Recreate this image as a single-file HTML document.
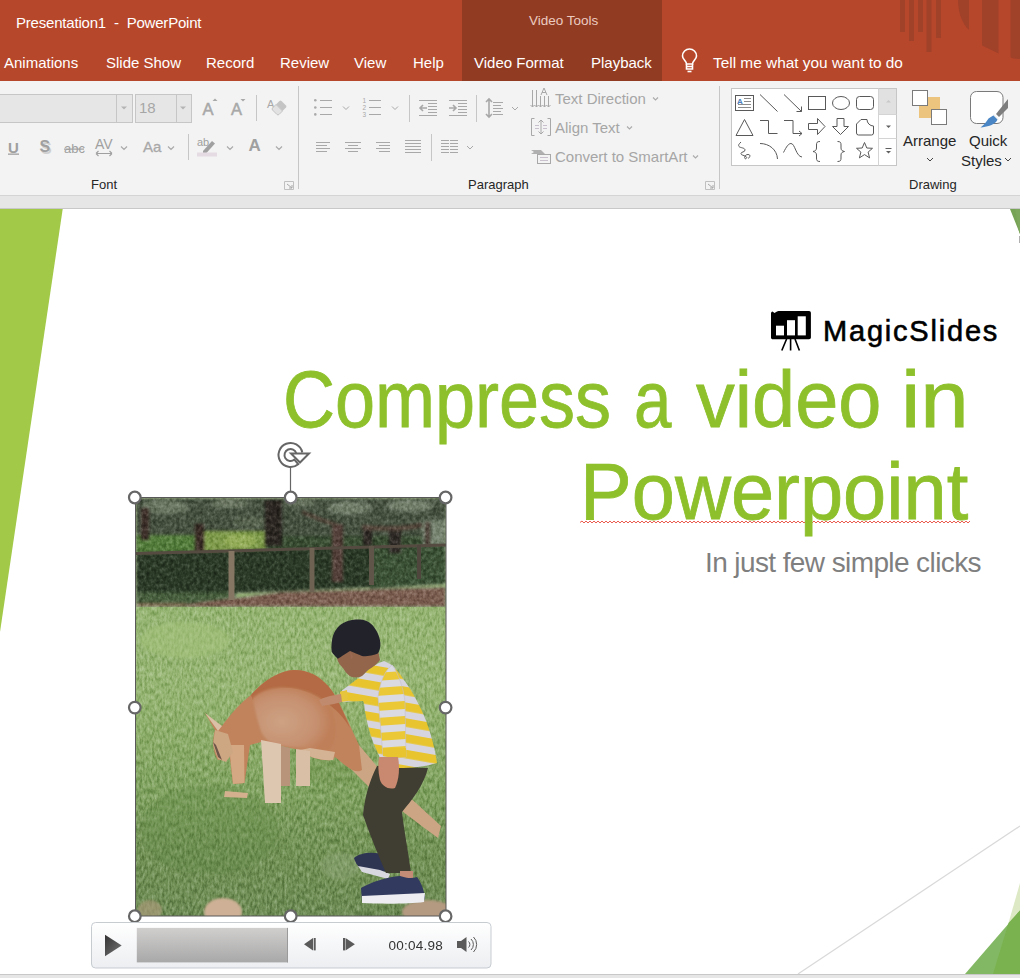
<!DOCTYPE html>
<html><head><meta charset="utf-8">
<style>
html,body{margin:0;padding:0;}
body{width:1020px;height:978px;overflow:hidden;position:relative;background:#fff;font-family:"Liberation Sans",sans-serif;}
.a{position:absolute;white-space:nowrap;}
#tb{position:absolute;left:0;top:0;width:1020px;height:81px;background:#B7472A;}
#ctx{position:absolute;left:462px;top:0;width:200px;height:81px;background:#923B23;}
.tw{color:#fff;font-size:15px;}
#rib{position:absolute;left:0;top:81px;width:1020px;height:114px;background:#F3F3F3;border-bottom:1px solid #D4D4D4;}
#gap{position:absolute;left:0;top:196px;width:1020px;height:12px;background:#E6E6E6;border-bottom:1px solid #C8C8C8;}
#slide{position:absolute;left:0;top:209px;width:1020px;height:765px;background:#fff;overflow:hidden;}
#bot{position:absolute;left:0;top:974px;width:1020px;height:4px;background:#E6E6E6;border-top:1px solid #C8C8C8;}
.gl{color:#A6A6A6;font-size:15px;}
.tt{font-size:80px;color:#8DC02B;-webkit-text-stroke:0.8px #8DC02B;transform-origin:0 0;}
.lbl{color:#262626;font-size:13px;}
</style></head>
<body>
<div id="tb"></div>
<div id="ctx"></div>

<svg class="a" style="left:660px;top:0" width="360" height="81" viewBox="660 0 360 81">
 <g fill="#A0412A">
  <rect x="900" y="0" width="5" height="32"/>
  <rect x="909" y="0" width="5" height="41"/>
  <rect x="918" y="0" width="5" height="32"/>
  <rect x="926.5" y="0" width="5" height="52"/>
  <rect x="936" y="0" width="5" height="38"/>
  <path d="M958 0h11v30c-7-6-11-18-11-30z"/>
  <path d="M982 0h16.5v53.5l-16.5-8z"/>
  <path d="M1010.5 0h9.5v59c-5 0-9.5-1-9.5-2z"/>
 </g>
 <g fill="none" stroke="#fff" stroke-width="1.6">
  <path d="M686.5 64c0-3-4-4.5-4-8a7 7 0 0 1 14 0c0 3.5-4 5-4 8z"/>
  <path d="M686.5 64v5h6v-5M686.5 66.5h6"/>
  <path d="M687.5 71.5h4"/>
 </g>
</svg>
<div class="a tw" style="left:16px;top:14px;letter-spacing:-0.2px;">Presentation1&nbsp; - &nbsp;PowerPoint</div>
<div class="a tw" style="left:529px;top:12.5px;font-size:13.5px;color:#EBCBC0;">Video Tools</div>
<div class="a tw" style="left:4px;top:54px;">Animations</div>
<div class="a tw" style="left:106px;top:54px;">Slide Show</div>
<div class="a tw" style="left:206px;top:54px;">Record</div>
<div class="a tw" style="left:280px;top:54px;">Review</div>
<div class="a tw" style="left:354px;top:54px;">View</div>
<div class="a tw" style="left:413px;top:54px;">Help</div>
<div class="a tw" style="left:474px;top:54px;">Video Format</div>
<div class="a tw" style="left:591px;top:54px;">Playback</div>
<div class="a tw" style="left:713px;top:54px;font-size:15.4px;">Tell me what you want to do</div>

<div id="rib"></div>
<div id="gap"></div>

<!-- FONT GROUP -->
<div class="a" style="left:-2px;top:94px;width:133px;height:27px;background:#E6E6E6;border:1px solid #C6C6C6;"></div>
<div class="a" style="left:116px;top:95px;width:1px;height:27px;background:#C6C6C6;"></div>
<div class="a" style="left:135px;top:94px;width:55px;height:27px;background:#E6E6E6;border:1px solid #C6C6C6;"></div>
<div class="a" style="left:176px;top:95px;width:1px;height:27px;background:#C6C6C6;"></div>
<svg class="a" style="left:0;top:81px" width="300" height="114" viewBox="0 81 300 114">
 <g fill="#B4B4B4"><path d="M121 106.5h6l-3 3z"/><path d="M180 106.5h6l-3 3z"/></g>
 <g fill="none" stroke="#AAAAAA" stroke-width="1.2">
  <path d="M121 146.5l3 3 3-3M168 146.5l3 3 3-3M227 146.5l3 3 3-3M276 146.5l3 3 3-3"/>
 </g>
 <g fill="#C6C6C6"><rect x="256" y="95" width="1" height="26"/><rect x="188" y="134" width="1" height="26"/></g>
 <rect x="298" y="86" width="1" height="103" fill="#C6C6C6"/>
 <!-- grow / shrink -->
 <text x="202.5" y="115" font-size="16.5" fill="#A8A8A8" stroke="#A8A8A8" stroke-width="0.5" font-family="Liberation Sans">A</text>
 <path d="M212.5 101l2.5-2.5 2.5 2.5z" fill="#A8A8A8"/>
 <text x="231" y="115" font-size="16.5" fill="#A8A8A8" stroke="#A8A8A8" stroke-width="0.5" font-family="Liberation Sans">A</text>
 <path d="M240.5 99h5l-2.5 2.5z" fill="#A8A8A8"/>
 <!-- clear formatting -->
 <text x="267" y="108" font-size="11" fill="#A8A8A8" font-family="Liberation Sans">A</text>
 <path d="M276 104.5l3.5-3.5a1.5 1.5 0 0 1 2 0l4.5 4.5a1.5 1.5 0 0 1 0 2l-3.5 3.5z" fill="#C4C4C4"/>
 <path d="M276 104.5l6.5 6.5-3.5 3.5a1.5 1.5 0 0 1-2 0l-4.5-4.5a1.5 1.5 0 0 1 0-2z" fill="#E2E2E2" stroke="#C4C4C4" stroke-width="1"/>
 <!-- U S abc AV Aa -->
 <text x="8" y="152.5" font-size="15" font-weight="bold" fill="#A0A0A0" font-family="Liberation Sans">U</text>
 <rect x="8" y="153.5" width="11" height="1.3" fill="#A0A0A0"/>
 <text x="41" y="153.5" font-size="16" font-weight="bold" fill="#D0D0D0" font-family="Liberation Sans">S</text>
 <text x="39.5" y="152" font-size="16" font-weight="bold" fill="#A0A0A0" font-family="Liberation Sans">S</text>
 <text x="64" y="153" font-size="13" fill="#A0A0A0" font-family="Liberation Sans">abc</text>
 <rect x="64" y="148.5" width="20" height="1.2" fill="#A0A0A0"/>
 <text x="95" y="149" font-size="14" fill="#A0A0A0" font-family="Liberation Sans">AV</text>
 <path d="M96 153.5h16M96 153.5l2.5-2.5M96 153.5l2.5 2.5M112 153.5l-2.5-2.5M112 153.5l-2.5 2.5" stroke="#A0A0A0" stroke-width="1.1" fill="none"/>
 <text x="143" y="152" font-size="15" fill="#A8A8A8" stroke="#A8A8A8" stroke-width="0.3" font-family="Liberation Sans">Aa</text>
 <!-- highlight -->
 <text x="197" y="146" font-size="11" fill="#A0A0A0" font-family="Liberation Sans">ab</text>
 <path d="M203 151l9-10 3 2.5-9 10h-3z" fill="#A0A0A0"/>
 <rect x="197" y="152.5" width="20" height="4" fill="#E5DCE3"/>
 <text x="248.5" y="151" font-size="17" font-weight="bold" fill="#A0A0A0" font-family="Liberation Sans">A</text>
 <!-- label launcher -->
 <path d="M284.5 181.5h9v8h-9z" fill="none" stroke="#C0C0C0" stroke-width="1"/>
 <path d="M287 184l5 4M292 185v3h-3" fill="none" stroke="#A8A8A8" stroke-width="1"/>
</svg>
<div class="a lbl" style="left:91px;top:177px;">Font</div>
<div class="a" style="left:139px;top:99px;font-size:15px;color:#A6A6A6;">18</div>


<!-- PARAGRAPH GROUP -->
<svg class="a" style="left:300px;top:81px" width="420" height="114" viewBox="300 81 420 114">
 <g fill="#AAAAAA">
  <circle cx="315.3" cy="100.3" r="1.3"/><circle cx="315.3" cy="107.5" r="1.3"/><circle cx="315.3" cy="114.4" r="1.3"/>
  <rect x="409" y="95" width="1" height="27" fill="#C6C6C6"/><rect x="476" y="95" width="1" height="27" fill="#C6C6C6"/>
  <rect x="431" y="134" width="1" height="27" fill="#C6C6C6"/>
  <rect x="719" y="86" width="1" height="103" fill="#C6C6C6"/>
 </g>
 <g stroke="#A8A8A8" stroke-width="1" fill="none">
  <path d="M320 100.5h12M320 107.5h12M320 114.5h12"/>
  <path d="M369 100.5h12M369 107.5h12M369 114.5h12"/>
  <path d="M316 142.5h14M316 145.5h11M316 148.5h14M316 151.5h11"/>
  <path d="M345 142.5h16M348 145.5h10M345 148.5h16M348 151.5h10"/>
  <path d="M376 142.5h14M379 145.5h11M376 148.5h14M379 151.5h11"/>
  <path d="M405 140.5h16M405 143.5h16M405 146.5h16M405 149.5h16M405 152.5h16"/>
  <path d="M441 140.5h8M441 143.5h8M441 146.5h8M441 149.5h8M441 152.5h8M450 140.5h8M450 143.5h8M450 146.5h8M450 149.5h8M450 152.5h8"/>
  <path d="M419 100.5h18M428 103.5h9M428 106.5h9M428 109.5h9M428 112.5h9M419 115.5h18"/>
  <path d="M449 100.5h18M458 103.5h9M458 106.5h9M458 109.5h9M458 112.5h9M449 115.5h18"/>
  <path d="M493 102.5h10M493 105.5h8M493 108.5h10M493 111.5h8M493 114.5h10"/>
  <path d="M343 106.5l3 3 3-3M392 106.5l3 3 3-3M512 107l3 3 3-3M467 146l3 3 3-3"/>
 </g>
 <g stroke="#A8A8A8" stroke-width="1.6" fill="none">
  <path d="M427 108h-7M423 105l-3 3 3 3"/>
  <path d="M449 108h7M453 105l3 3-3 3"/>
  <path d="M489 100v16M486 102l3-3 3 3M486 114l3 3 3-3"/>
 </g>
 <g font-family="Liberation Sans" font-size="6.5" fill="#A8A8A8">
  <text x="362.5" y="103">1</text><text x="362.5" y="110">2</text><text x="362.5" y="117">3</text>
 </g>
 <!-- text direction icon -->
 <g stroke="#A8A8A8" stroke-width="1" fill="none">
  <path d="M532.5 90v17M536.5 90v17M540.5 96v11M544.5 96v11M548.5 96v11"/>
  <path d="M530.5 105l2 2 2-2M534.5 105l2 2 2-2M538.5 105l2 2 2-2M542.5 105l2 2 2-2M546.5 105l2 2 2-2"/>
  <path d="M541 95l3-7 3 7M542 92.5h4"/>
  <path d="M531.5 118.5h3M531.5 118.5v17h3M550.5 118.5h-3M550.5 118.5v17h-3"/>
  <path d="M541 120v14M538.5 122.5l2.5-2.5 2.5 2.5M538.5 131.5l2.5 2.5 2.5-2.5"/>
  <path d="M535 125.5h4M543 125.5h4M535 128.5h4M543 128.5h4" stroke="#C8C0CC"/>
 </g>
 <path d="M531 150h10l4 4h-14l3-2z" fill="#B0B0B0"/>
 <rect x="537.5" y="154.5" width="13" height="9" fill="#F3F3F3" stroke="#A8A8A8"/>
 <path d="M540 157.5h8M540 160.5h8" stroke="#C8C0CC"/>
 <g stroke="#AAAAAA" stroke-width="1.1" fill="none">
  <path d="M653 97.5l2.5 2.5 2.5-2.5M627 126.5l2.5 2.5 2.5-2.5M693 155.5l2.5 2.5 2.5-2.5"/>
 </g>
 <path d="M705.5 181.5h9v8h-9z" fill="none" stroke="#C0C0C0" stroke-width="1"/>
 <path d="M708 184l5 4M713 185v3h-3" fill="none" stroke="#A8A8A8" stroke-width="1"/>
</svg>
<div class="a gl" style="left:555px;top:90px;">Text Direction</div>
<div class="a gl" style="left:555px;top:119px;">Align Text</div>
<div class="a gl" style="left:555px;top:148px;">Convert to SmartArt</div>
<div class="a lbl" style="left:468px;top:177px;">Paragraph</div>


<!-- DRAWING GROUP -->
<svg class="a" style="left:720px;top:81px" width="300" height="114" viewBox="720 81 300 114">
 <rect x="731.5" y="88.5" width="165" height="77" fill="#fff" stroke="#C6C6C6"/>
 <rect x="878.5" y="89" width="17.5" height="25.5" fill="#E1E1E1"/>
 <path d="M878.5 88.5v77M878.5 114.5h18M878.5 138.5h18" stroke="#D4D4D4" fill="none"/>
 <path d="M886 102.5h5l-2.5-2.5z" fill="#C8C8C8"/>
 <path d="M886 125.5h5l-2.5 2.5z" fill="#606060"/>
 <path d="M885.5 148.5h6" stroke="#606060"/>
 <path d="M886 151h5l-2.5 2.5z" fill="#606060"/>
 <g stroke="#595959" stroke-width="1" fill="none">
  <rect x="735.5" y="95.5" width="18" height="15"/>
  <path d="M744 98.5h7M744 101.5h7M738 104.5h13M738 107.5h13" stroke="#8C8C8C"/>
  <path d="M760 94.5l17.5 17"/>
  <path d="M784 94.5l17.5 17M801.5 111.5v-5M801.5 111.5h-5"/>
  <rect x="808.5" y="96.5" width="17" height="13"/>
  <ellipse cx="841" cy="103" rx="8.5" ry="6.5"/>
  <rect x="856.5" y="96.5" width="17" height="13" rx="3"/>
  <path d="M736 135.5l8.5-16 8.5 16z"/>
  <path d="M760 120.5h8.5v13h9"/>
  <path d="M784 120.5h9v13h9M799 131l3 2.5-3 2.5"/>
  <path d="M808.5 123.5h9v-5l7.5 8-7.5 8v-5h-9z"/>
  <path d="M837 118.5h7v8h4.5l-8 8-8-8h4.5z"/>
  <path d="M856.5 133v-9l4.5-4.5h6a6.5 6.5 0 0 0 6.5 6.5v7a2 2 0 0 1-2 2h-13a2 2 0 0 1-2-2z"/>
  <path d="M760 143.5c9 0 17 6 17.5 15.5"/>
  <path d="M783.5 152.5c3-6 5-9 7.5-9 4 0 5 13 11 13.5"/>
  <path d="M741 142c-2 2-3 3-2 4.5 1 1.5 6 1 6 3.5s-4 1.5-4 3.5 3 1.5 5 3-1 3-1 2c-1-1 0-4 3-4s2 3 0 4"/>
  <path d="M820 141.5c-3 0-3.5 1-3.5 3.5v3c0 2-1 3-3.5 3.5 2.5.5 3.5 1.5 3.5 3.5v3c0 2.5.5 3.5 3.5 3.5"/>
  <path d="M837.5 141.5c3 0 3.5 1 3.5 3.5v3c0 2 1 3 3.5 3.5-2.5.5-3.5 1.5-3.5 3.5v3c0 2.5-.5 3.5-3.5 3.5"/>
  <path d="M864.5 142.5l2.3 5.5 5.7.3-4.4 3.8 1.5 5.8-5.1-3.3-5.1 3.3 1.5-5.8-4.4-3.8 5.7-.3z"/>
 </g>
 <text x="737" y="104" font-family="Liberation Sans" font-size="8" font-weight="bold" fill="#4A7EBB">A</text>
 <!-- Arrange -->
 <rect x="919" y="97" width="21" height="21" fill="#EDC47E"/>
 <rect x="912.5" y="90.5" width="15" height="15" fill="#fff" stroke="#7A7A7A"/>
 <rect x="931.5" y="109.5" width="15" height="15" fill="#fff" stroke="#7A7A7A"/>
 <path d="M927 158l3 3 3-3M1005 158l3 3 3-3" stroke="#444" stroke-width="1" fill="none"/>
 <!-- Quick styles -->
 <rect x="970.5" y="91.5" width="32.5" height="32" rx="6" fill="#fff" stroke="#7A7A7A"/>
 <path d="M1008 99l-12 15 3 3 9-9z" fill="#7D7D7D"/>
 <path d="M994 115l4 4-2 3c-3 3-9 5-15.5 5.5 4-3 6-6 8-9z" fill="#4A86C5"/>
 <path d="M993.5 114.5l5 5" stroke="#F3F3F3" stroke-width="1.5"/>
</svg>
<div class="a" style="left:903px;top:132px;font-size:15px;color:#262626;">Arrange</div>
<div class="a" style="left:969px;top:132px;font-size:15px;color:#262626;">Quick</div>
<div class="a" style="left:961px;top:152px;font-size:15px;color:#262626;">Styles</div>
<div class="a lbl" style="left:909px;top:177px;">Drawing</div>

<div id="slide">
 <svg class="a" style="left:0;top:0" width="1020" height="765" viewBox="0 209 1020 765">
  <path d="M0 209h62.7L0 632z" fill="#A2C947"/>
  <path d="M1010 209h10v25z" fill="#76A355"/>
  <path d="M1015 209h5v25l-1-2.5z" fill="#7CA75C"/>
  <path d="M1019.5 236v7" stroke="#B0B0B0" stroke-width="1"/>
  <path d="M798 974L1020 826" stroke="#D9D9D9" stroke-width="1.2" fill="none"/>
  <path d="M1008.5 923L1020 883v40z" fill="#DDE9C4"/>
  <path d="M965 974L1020 910.5V974z" fill="#82B863"/>
  <path d="M993 974L1008.5 923 1020 910.5V974z" fill="#7AB24F"/>
 </svg>

 <svg class="a" style="left:760px;top:95px" width="60" height="50" viewBox="760 304 60 50">
  <path d="M771 313.5c0-1 .5-2 1.5-2l2 1.5 2.5-1.5 1.5-.5h30.5c1.2 0 1.9.8 1.9 2v24.5c0 1.1-.8 1.7-1.9 1.7h-36.2c-1.1 0-1.8-.7-1.8-1.8z" fill="#000"/>
  <g fill="#fff"><rect x="776" y="325.7" width="8" height="9.7"/><rect x="787" y="320.2" width="8" height="15.2"/><rect x="797.7" y="316.3" width="8.1" height="19.1"/></g>
  <path d="M786.6 339l-4.8 11.5M790.6 339v11.5M795 339l4.4 11.5" stroke="#000" stroke-width="1.6" fill="none"/>
 </svg>
 <div class="a" id="logo" style="left:823px;top:106px;font-size:29px;letter-spacing:1.8px;color:#000;-webkit-text-stroke:0.6px #000;">MagicSlides</div>
 <svg class="a" style="left:580px;top:311px" width="390" height="6" viewBox="0 0 390 6">
  <path d="M0 2.5 L2 1 L4 3 L6 1 L8 3 L10 1 L12 3 L14 1 L16 3 L18 1 L20 3 L22 1 L24 3 L26 1 L28 3 L30 1 L32 3 L34 1 L36 3 L38 1 L40 3 L42 1 L44 3 L46 1 L48 3 L50 1 L52 3 L54 1 L56 3 L58 1 L60 3 L62 1 L64 3 L66 1 L68 3 L70 1 L72 3 L74 1 L76 3 L78 1 L80 3 L82 1 L84 3 L86 1 L88 3 L90 1 L92 3 L94 1 L96 3 L98 1 L100 3 L102 1 L104 3 L106 1 L108 3 L110 1 L112 3 L114 1 L116 3 L118 1 L120 3 L122 1 L124 3 L126 1 L128 3 L130 1 L132 3 L134 1 L136 3 L138 1 L140 3 L142 1 L144 3 L146 1 L148 3 L150 1 L152 3 L154 1 L156 3 L158 1 L160 3 L162 1 L164 3 L166 1 L168 3 L170 1 L172 3 L174 1 L176 3 L178 1 L180 3 L182 1 L184 3 L186 1 L188 3 L190 1 L192 3 L194 1 L196 3 L198 1 L200 3 L202 1 L204 3 L206 1 L208 3 L210 1 L212 3 L214 1 L216 3 L218 1 L220 3 L222 1 L224 3 L226 1 L228 3 L230 1 L232 3 L234 1 L236 3 L238 1 L240 3 L242 1 L244 3 L246 1 L248 3 L250 1 L252 3 L254 1 L256 3 L258 1 L260 3 L262 1 L264 3 L266 1 L268 3 L270 1 L272 3 L274 1 L276 3 L278 1 L280 3 L282 1 L284 3 L286 1 L288 3 L290 1 L292 3 L294 1 L296 3 L298 1 L300 3 L302 1 L304 3 L306 1 L308 3 L310 1 L312 3 L314 1 L316 3 L318 1 L320 3 L322 1 L324 3 L326 1 L328 3 L330 1 L332 3 L334 1 L336 3 L338 1 L340 3 L342 1 L344 3 L346 1 L348 3 L350 1 L352 3 L354 1 L356 3 L358 1 L360 3 L362 1 L364 3 L366 1 L368 3 L370 1 L372 3 L374 1 L376 3 L378 1 L380 3 L382 1 L384 3 L386 1 L388 3 L390 1 L392 3 L394 1" stroke="#E84A3C" stroke-width="0.9" fill="none"/>
 </svg>
 <div class="a tt" style="left:283px;top:145px;transform:scaleX(0.9);">Compress</div>
 <div class="a tt" style="left:633.5px;top:145px;transform:scaleX(0.84);">a</div>
 <div class="a tt" style="left:696px;top:145px;transform:scaleX(0.97);">video</div>
 <div class="a tt" style="left:901px;top:145px;transform:scaleX(1.09);">in</div>
 <div class="a tt" style="left:580px;top:237px;transform:scaleX(0.97);">Powerpoint</div>
 <div class="a" id="t3" style="left:705px;top:338px;font-size:28px;letter-spacing:-0.6px;color:#7F7F7F;">In just few simple clicks</div>
</div>
<svg class="a" style="left:136px;top:498px" width="310" height="418" viewBox="136 498 310 418">
 <defs>
  <linearGradient id="gg" x1="0" y1="0" x2="0" y2="1">
   <stop offset="0.25" stop-color="#96B573"/>
   <stop offset="0.4" stop-color="#8EAF6B"/>
   <stop offset="0.6" stop-color="#80A260"/>
   <stop offset="0.8" stop-color="#729256"/>
   <stop offset="1" stop-color="#6E8C55"/>
  </linearGradient>
  <filter id="bl" x="-5%" y="-5%" width="110%" height="110%"><feGaussianBlur stdDeviation="1.2"/></filter>
  <filter id="bl2"><feGaussianBlur stdDeviation="0.6"/></filter>
  <filter id="gtex" x="0" y="0" width="100%" height="100%" color-interpolation-filters="sRGB">
   <feTurbulence type="fractalNoise" baseFrequency="0.4 0.18" numOctaves="3" seed="11" result="n"/>
   <feColorMatrix in="n" type="matrix" values="0.8 0 0 0 0.1  0.8 0 0 0 0.1  0.8 0 0 0 0.1  0 0 0 0 1" result="g"/>
   <feBlend in="g" in2="SourceGraphic" mode="soft-light" result="b"/>
   <feComposite in="b" in2="SourceGraphic" operator="in"/>
  </filter>
  <filter id="scn" x="0" y="0" width="100%" height="100%" color-interpolation-filters="sRGB">
   <feGaussianBlur in="SourceGraphic" stdDeviation="1.7" result="bb"/>
   <feTurbulence type="fractalNoise" baseFrequency="0.3 0.25" numOctaves="3" seed="5" result="n"/>
   <feColorMatrix in="n" type="matrix" values="0.7 0 0 0 0.15  0.7 0 0 0 0.15  0.7 0 0 0 0.15  0 0 0 0 1" result="g"/>
   <feBlend in="g" in2="bb" mode="soft-light" result="b"/>
   <feComposite in="b" in2="bb" operator="in"/>
  </filter>
  <radialGradient id="thg" cx="0.35" cy="0.55" r="0.6">
   <stop offset="0" stop-color="#CDA283"/>
   <stop offset="0.7" stop-color="#C69070"/>
   <stop offset="1" stop-color="#BF7F58"/>
  </radialGradient>
  <pattern id="stripes" patternUnits="userSpaceOnUse" x="0" y="667" width="60" height="15.5" patternTransform="rotate(10 380 700)">
   <rect width="60" height="15.5" fill="#D6D4DF"/>
   <rect width="60" height="8.5" fill="#E8C52E"/>
  </pattern>
  <pattern id="stripes2" patternUnits="userSpaceOnUse" x="0" y="672" width="60" height="15" patternTransform="rotate(-4 390 700)">
   <rect width="60" height="15" fill="#DADAE2"/>
   <rect width="60" height="8" fill="#EBC834"/>
  </pattern>
 </defs>
 <rect x="136" y="498" width="310" height="418" fill="url(#gg)"/>
 <rect x="136" y="605" width="310" height="311" fill="url(#gg)" filter="url(#gtex)"/>
 <g filter="url(#scn)">
  <!-- canopy -->
  <rect x="136" y="498" width="310" height="44" fill="#465140"/>
  <ellipse cx="165" cy="507" rx="24" ry="7" fill="#6C7863"/>
  <ellipse cx="230" cy="504" rx="20" ry="5" fill="#68735F"/>
  <ellipse cx="300" cy="503" rx="16" ry="4" fill="#66715D"/>
  <ellipse cx="350" cy="508" rx="22" ry="7" fill="#707C68"/>
  <ellipse cx="410" cy="506" rx="24" ry="6" fill="#74806C"/>
  <ellipse cx="250" cy="522" rx="18" ry="6" fill="#58634F"/>
  <!-- bushes -->
  <rect x="136" y="535" width="66" height="18" fill="#547D3C"/>
  <rect x="204" y="531" width="62" height="21" fill="#7E9A4A"/>
  <ellipse cx="240" cy="541" rx="16" ry="7" fill="#93AC58"/>
  <rect x="266" y="536" width="160" height="15" fill="#3A4E33"/>
  <rect x="422" y="520" width="24" height="60" fill="#76836F"/>
  <!-- hedge -->
  <path d="M136 553L446 545V584L136 598z" fill="#2B3A27"/>
  <path d="M370 548L446 545V584L370 589z" fill="#3C5236"/>
  <path d="M136 592h100v14H136z" fill="#485F3E"/>
  <!-- dirt -->
  <path d="M180 605L281 592 446 587V607H180z" fill="#7B5E50"/>
  <path d="M136 603h50v4h-50z" fill="#7D6A52"/>
  <!-- trunks -->
  <rect x="141" y="508" width="8" height="32" fill="#3E302A"/>
  <rect x="195" y="524" width="9" height="28" fill="#3A2C26"/>
  <rect x="265" y="500" width="17" height="46" fill="#2B2621"/>
  <rect x="332" y="524" width="11" height="58" fill="#54403A"/>
  <rect x="363" y="526" width="9" height="20" fill="#2E2824"/>
  <rect x="389" y="527" width="12" height="26" fill="#2F2A26"/>
  <rect x="425" y="522" width="5" height="24" fill="#4A3E36"/>
  <path d="M302 512Q320 520 337 525" stroke="#5A4A3F" stroke-width="3.5" fill="none"/>
  <path d="M362 527Q395 531 422 525" stroke="#5A4A3F" stroke-width="4.5" fill="none"/>
 </g>
  <g filter="url(#bl2)">
  <!-- fence -->
  <path d="M136 553.5L446 545" stroke="#554B40" stroke-width="3" fill="none"/>
  <path d="M231.5 551v49" stroke="#857663" stroke-width="6" fill="none"/>
  <path d="M312 548v44" stroke="#6E6252" stroke-width="5" fill="none"/>
  <path d="M371.5 546v39" stroke="#5F5548" stroke-width="5" fill="none"/>
  <path d="M419 545v34" stroke="#4F473C" stroke-width="4" fill="none"/>
 </g>
 <g filter="url(#bl)" opacity="0.5">
  <ellipse cx="185" cy="640" rx="45" ry="18" fill="#A6C47C"/>
  <ellipse cx="210" cy="830" rx="70" ry="45" fill="#5E8442" opacity="0.5"/>
  <ellipse cx="330" cy="760" rx="40" ry="25" fill="#5E8442" opacity="0.4"/>
 </g>
 <g filter="url(#bl)">
  <!-- dirt patches -->
  <ellipse cx="223" cy="912" rx="19" ry="14" fill="#CDB095"/>
  <ellipse cx="340" cy="866" rx="20" ry="14" fill="#9AAE80" opacity="0.35"/>
  <ellipse cx="150" cy="910" rx="12" ry="10" fill="#A89A78" opacity="0.7"/>
  <ellipse cx="428" cy="912" rx="26" ry="12" fill="#B39A80"/>
 </g>
 <!-- kangaroo -->
 <g filter="url(#bl2)">
  <path d="M359 745L380 770 441 826 438 838C420 825 395 805 372 790L350 768z" fill="#CCA585"/>
  <path d="M205 713C210 718 216 722 222 726C230 715 240 703 251 695C262 682 278 671 294 670C312 670 328 680 339 703C346 716 352 730 359 745L362 770C355 775 345 765 335 757L333 760C320 761 308 757 300 750L290 748 281 746 261 742 250 745 244.5 783 233 784 229 750C226 756 223 760 218 760C213 752 212 742 215 730z" fill="#C0835C"/>
  <path d="M251 695C262 682 278 671 294 670C312 670 328 680 339 703C343 712 347 720 350 728C340 710 318 692 290 688C272 687 258 695 252.7 700z" fill="#B36B44"/>
  <path d="M252.7 698C262 690 275 686 290 688C310 690 328 700 333 712C338 728 336 745 328 750L283 746C270 745 262 738 259 725C256 715 254 705 252.7 698z" fill="url(#thg)" filter="url(#bl)"/>
  <path d="M300 750C308 757 320 761 333 760L335 752 310 748z" fill="#D4B294"/>
  <path d="M261 740L281 744 281 803 265 803z" fill="#DDC7B1"/>
  <path d="M281 746L290 748 290 786 281 786z" fill="#B8957A"/>
  <path d="M296 749L310 751 310 786 296 786z" fill="#D8BFA5"/>
  <path d="M229 745L244 745 244.5 783 233 784z" fill="#D3A883"/>
  <path d="M225 791L248 793 247 798 224 797z" fill="#D4B08E"/>
  <path d="M215 730L228 734 233 752 226 762 218 759 213 745z" fill="#CDA682"/>
  <path d="M213 742L218 757 222 760 216 745z" fill="#6E5448"/>
  <path d="M205 713L222 726 218 731z" fill="#D9C0A6"/>
 </g>
 <!-- child -->
 <g filter="url(#bl2)">
  <!-- back shoe -->
  <path d="M354 858C360 853 372 851 386 855L389 871 372 873C362 871 356 866 354 858z" fill="#2E3453"/>
  <path d="M358 866L380 870 390 874 388 879 362 872z" fill="#D8D8E0"/>
  <!-- pants -->
  <path d="M377 766L428 768C424 785 412 800 402 812C404 830 408 850 411 873L386 873C378 855 370 835 363 815C365 795 370 780 377 766z" fill="#3F3E32"/>
  <!-- ankle -->
  <path d="M400 871L413 871 413 882 400 882z" fill="#C48B76"/>
  <!-- front shoe -->
  <path d="M361 888C372 882 386 877 400 876C406 878 412 879 417 877C421 882 424 890 425 897L424 901C410 903 380 903 362 902z" fill="#323A5E"/>
  <path d="M362 896L425 893 424 902C410 904 380 904 362 903z" fill="#EDEDF2"/>
  <!-- shirt -->
  <path d="M364 674C370 668 377 663 384 661L392 665C400 673 412 690 421 709C428 724 434 742 437 763C425 767 410 768 399 768C390 766 384 763 380 758L373 742C368 728 365 714 364 703L363 701 341 702 340 692C348 686 356 680 364 674z" fill="url(#stripes)"/>
  <path d="M392 665C398 672 404 690 405 702L406 757C398 758 390 758 383 756L378 697C380 682 385 670 392 665z" fill="url(#stripes2)" stroke="#C4C0D0" stroke-width="0.6"/>
  <path d="M383 748L406 748 406 757C398 758 390 758 383 756z" fill="#E8C52E"/>
  <path d="M340 692L347 690 348 701 341 702z" fill="#E6C43A"/>
  <!-- hand left -->
  <path d="M319 700C324 697 333 695 341 694L342 702C335 704 328 705 322 706z" fill="#C08A6E"/>
  <!-- hand right -->
  <path d="M379 757L398 757C400 768 399 780 395 788C388 790 382 786 380 780C378 772 378 764 379 757z" fill="#C9896F"/>
  <!-- face -->
  <path d="M337 658C338 663 341 666 343 668C346 673 349 676 352 677C356 678 360 677 362 676L368 670C373 667 377 664 380 660L378 650 350 650z" fill="#93654C"/>
  <!-- hair -->
  <path d="M331.7 651.7C331 645 332 637 334.3 632.6C337 627 341 624 344.8 622.2C350 620 355 619.5 360.4 619.6C367 620 372 624 374.3 627.4C378 632 380 638 380.4 643C380.5 648 379.5 651 377.8 653.5C372 656 366 656.5 362 656C357 654 353 652 350 651C345 654 341 657 337.8 658.7C335 656 333 654 331.7 651.7z" fill="#24242C"/>
  <path d="M350 651l3 6-2 2z" fill="#9A6A52"/>
 </g>
</svg>


<svg class="a" style="left:80px;top:430px" width="420" height="548" viewBox="80 430 420 548">
 <rect x="135.5" y="497.5" width="310.5" height="418.5" fill="none" stroke="#595959" stroke-width="1"/>
 <path d="M290.5 468v23" stroke="#666" stroke-width="1.2"/>
 <g fill="#fff" stroke="#666" stroke-width="2.2">
  <circle cx="134.8" cy="497.5" r="5.8"/><circle cx="290.7" cy="497.5" r="5.8"/><circle cx="445.6" cy="497.5" r="5.8"/>
  <circle cx="134.8" cy="707.6" r="5.8"/><circle cx="445.6" cy="707.6" r="5.8"/>
  <circle cx="134.8" cy="916.2" r="5.8"/><circle cx="290.7" cy="916.2" r="5.8"/><circle cx="445.6" cy="916.2" r="5.8"/>
 </g>
 <g fill="none" stroke="#666" stroke-width="2">
  <path d="M302.3 452.5A12 12 0 1 0 298.2 464.2L294.4 459.6A6 6 0 1 1 296.3 453.5"/>
 </g>
 <path d="M291 453.5h18l-9 9z" fill="#fff" stroke="#666" stroke-width="2" stroke-linejoin="miter"/>
 <!-- control bar -->
 <defs>
  <linearGradient id="cb" x1="0" y1="0" x2="0" y2="1"><stop offset="0" stop-color="#FFFFFF"/><stop offset="1" stop-color="#ECEEF1"/></linearGradient>
  <linearGradient id="pb" x1="0" y1="0" x2="0" y2="1"><stop offset="0" stop-color="#D0CFCE"/><stop offset="1" stop-color="#A9A8A8"/></linearGradient>
  <linearGradient id="pl" x1="0" y1="0" x2="1" y2="1"><stop offset="0" stop-color="#333"/><stop offset="1" stop-color="#777"/></linearGradient>
 </defs>
 <rect x="91.5" y="922.5" width="399.5" height="45.5" rx="4" fill="url(#cb)" stroke="#C7CCD1"/>
 <path d="M105 934.7L121.7 945.5 105 956.2z" fill="url(#pl)"/>
 <rect x="136.8" y="927.9" width="151.2" height="34.5" fill="url(#pb)"/>
 <rect x="287" y="927.9" width="1" height="34.5" fill="#9A9A9A"/>
 <g fill="#5A5A5A">
  <path d="M313 938L304 944.2 313 950.4z"/><rect x="313.7" y="938" width="2" height="12.4"/>
  <rect x="343" y="938" width="2" height="12.4"/><path d="M345.5 938L354.9 944.2 345.5 950.4z"/>
  <path d="M457 941h4l5.5-4v15l-5.5-4h-4z"/>
 </g>
 <path d="M468.5 941.5a4 4 0 0 1 0 6M471 939a7.5 7.5 0 0 1 0 11M473.5 937a10.5 10.5 0 0 1 0 15" stroke="#5A5A5A" stroke-width="1" fill="none"/>
</svg>
<div class="a" style="left:388.5px;top:937.5px;font-size:13.5px;letter-spacing:0.25px;color:#333;">00:04.98</div>

<div id="bot"></div>
</body></html>
